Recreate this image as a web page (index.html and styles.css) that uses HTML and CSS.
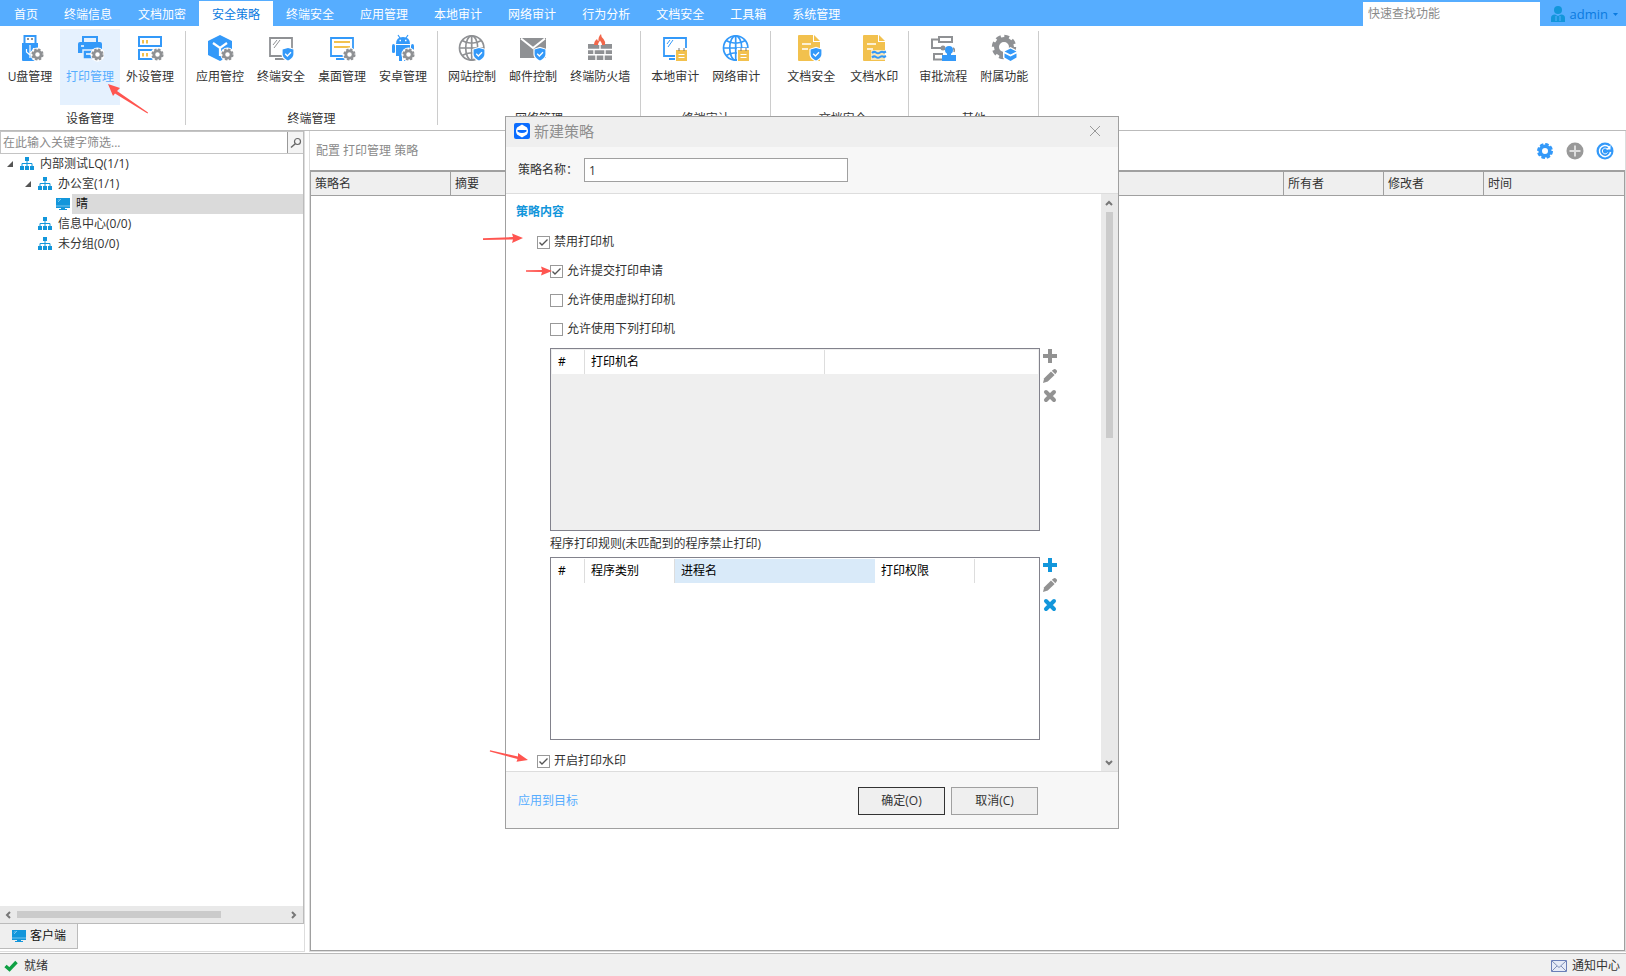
FILE: index.html
```html
<!DOCTYPE html>
<html lang="zh-CN">
<head>
<meta charset="utf-8">
<title>安全策略 - 打印管理</title>
<link rel="stylesheet" href="styles.css">
</head>
<body>
<svg class="defs" aria-hidden="true">
  <symbol id="gear" viewBox="-8 -8 16 16">
    <circle r="7.6" fill="#fff"/>
    <circle r="3.9" fill="#fff" stroke="#8f9194" stroke-width="3"/>
    <circle r="5.6" fill="none" stroke="#8f9194" stroke-width="1.8" stroke-dasharray="2.6 1.8"/>
  </symbol>
  <symbol id="shield" viewBox="-8 -8 16 16">
    <path d="M0-7.2L6.6-5V0C6.6 4 3 6.600 0 7.6C-3 6.600-6.6 4-6.6 0V-5Z" fill="#fff"/>
    <path d="M0-6L5.4-4.4V0C5.4 3.4 2.4 5.4 0 6.4C-2.4 5.4-5.4 3.4-5.4 0V-4.4Z" fill="#3399f9"/>
    <path d="M-2.8-.2L-.6 2L3-1.8" fill="none" stroke="#fff" stroke-width="1.3"/>
  </symbol>
  <symbol id="note" viewBox="0 0 13 14">
    <path d="M0 1H13V14H0Z" fill="#fff"/>
    <path d="M1 3H12V14H1Z" fill="#f2c14e"/>
    <path d="M4 1V4M9 1V4" stroke="#777" stroke-width="1"/>
    <path d="M3.5 7.5H9.5M3.5 10.5H9.5" stroke="#fff" stroke-width="1.2"/>
  </symbol>
  <symbol id="globe" viewBox="0 0 28 28">
    <g fill="none" stroke="currentColor" stroke-width="1.7">
      <circle cx="13.7" cy="14" r="12.2"/><ellipse cx="13.7" cy="14" rx="6" ry="12.2"/>
      <path d="M13.7 2V26M1.5 14H26M4 6.5Q13.7 12 23.4 6.5M4 21.5Q13.7 16 23.4 21.5"/>
    </g>
  </symbol>
  <symbol id="monitor" viewBox="0 0 28 28">
    <path d="M3 4H25V22H3Z" fill="none" stroke="currentColor" stroke-width="1.8"/>
    <path d="M8 25H19" stroke="currentColor" stroke-width="2"/>
  </symbol>
  <symbol id="doc" viewBox="0 0 28 28">
    <path d="M2 1H16V8H23V27H2Q1 27 1 26V2Q1 1 2 1Z" fill="#f2c14e"/>
    <path d="M17 1L23 7H17Z" fill="#f2c14e"/>
    <path d="M5 10H14M5 15H11" stroke="#fff" stroke-width="1.6"/>
  </symbol>
  <symbol id="org" viewBox="0 0 14 14">
    <path d="M5 0H9V4H5ZM0 9H4V13H0ZM5 9H9V13H5ZM10 9H14V13H10Z" fill="#1296db"/>
    <path d="M7 4V9M2 9V6.5H12V9" fill="none" stroke="#1296db"/>
  </symbol>
  <symbol id="pc" viewBox="0 0 14 14">
    <path d="M0 1H14V11H0Z" fill="#1296db"/>
    <path d="M0 9H14" stroke="#8fd0f2" stroke-width=".8"/>
    <path d="M2 5L5 2M2 3.5L3.5 2" stroke="#8fd0f2" stroke-width=".8"/>
    <path d="M5 11H9V12H11V13H3V12H5Z" fill="#1296db"/>
  </symbol>
  <symbol id="plus" viewBox="0 0 14 14"><path d="M5 0H9V5H14V9H9V14H5V9H0V5H5Z" fill="currentColor"/></symbol>
  <symbol id="pencil" viewBox="0 0 14 14">
    <path d="M0 14L1.2 9.2L8 2.4L11.600 6L4.8 12.6Z" fill="currentColor"/>
    <path d="M8.800 1.800L10.500 .4Q12 -.4 13.4 1Q14.6 2.4 13.6 3.600L12.300 5.200Z" fill="currentColor"/>
  </symbol>
  <symbol id="cross" viewBox="0 0 14 14"><path d="M3 3L11 11M11 3L3 11" stroke="currentColor" stroke-width="4" stroke-linecap="round"/></symbol>
  <symbol id="chev" viewBox="0 0 8 8"><path d="M1 6L4 3L7 6" fill="none" stroke="currentColor" stroke-width="2"/></symbol>
</svg>

<header class="topbar">
  <nav class="tabs">
    <a href="#">首页</a><a href="#">终端信息</a><a href="#">文档加密</a><a href="#" class="active">安全策略</a><a href="#">终端安全</a><a href="#">应用管理</a><a href="#">本地审计</a><a href="#">网络审计</a><a href="#">行为分析</a><a href="#">文档安全</a><a href="#">工具箱</a><a href="#">系统管理</a>
  </nav>
  <input class="quick-search" type="text" placeholder="快速查找功能" aria-label="快速查找功能">
  <button class="user">
    <svg width="14" height="16" viewBox="0 0 14 16"><ellipse cx="7" cy="4" rx="4" ry="4" fill="#1296db"/><path d="M0 16V12Q0 9 4 8.6L7 10L10 8.6Q14 9 14 12V16Z" fill="#1296db"/><path d="M5 10V15M9 10V15" stroke="#56adff"/></svg>
    <span>admin</span>
    <svg width="5" height="3" viewBox="0 0 5 3"><path d="M0 0H5L2.500 3Z" fill="#0a7ae0"/></svg>
  </button>
</header>

<section class="ribbon">
  <div class="group first">
    <div class="tools">
      <button class="tool"><svg class="ico" viewBox="0 0 28 28"><path d="M6 9H22V27H7Q6 27 6 26Z" fill="#3399f9"/><path d="M8.500 9V2H19.500V9" fill="#fff" stroke="#3399f9" stroke-width="2"/><path d="M11 4H13V6H11ZM15 4H17V6H15Z" fill="#8f9194"/><path d="M14 11V24M10.500 15V18L14 21M17.500 14V17L14 19" fill="none" stroke="#fff" stroke-width="1.200"/><use href="#gear" x="14" y="13" width="15" height="15"/></svg>U盘管理</button>
      <button class="tool selected"><svg class="ico" viewBox="0 0 28 28"><path d="M7 9V3H21V9" fill="none" stroke="#3399f9" stroke-width="2"/><path d="M4 8H24Q26 8 26 10V19H2V10Q2 8 4 8Z" fill="#3399f9"/><path d="M5 12H8" stroke="#fff" stroke-width="1.500"/><path d="M7 16H21V25H7Z" fill="#3399f9" stroke="#e5f1fe" stroke-width="1.500"/><path d="M10 20H15" stroke="#fff" stroke-width="1.500"/><use href="#gear" x="14" y="13" width="15" height="15"/></svg>打印管理</button>
      <button class="tool"><svg class="ico" viewBox="0 0 28 28"><path d="M3 3H25V12H3ZM3 16H25V25H3Z" fill="none" stroke="#3399f9" stroke-width="2"/><path d="M7 6V9.500M11 6V9.500M7 19V22.500M11 19V22.500" stroke="#f2c14e" stroke-width="2"/><use href="#gear" x="14" y="13" width="15" height="15"/></svg>外设管理</button>
    </div>
    <div class="caption">设备管理</div>
  </div>
  <div class="group">
    <div class="tools">
      <button class="tool"><svg class="ico" viewBox="0 0 28 28"><path d="M14 1L26 7V21L14 27L2 21V7Z" fill="#3399f9"/><path d="M7 9L14 14L21 9M14 14V22" fill="none" stroke="#fff" stroke-width="2.200"/><use href="#gear" x="14" y="13" width="15" height="15"/></svg>应用管控</button>
      <button class="tool grey"><svg class="ico" viewBox="0 0 28 28"><use href="#monitor"/><path d="M6 11L10 6M7 14L13 6" stroke="#8f9194"/><use href="#shield" x="13" y="12" width="16" height="16"/></svg>终端安全</button>
      <button class="tool"><svg class="ico blue" viewBox="0 0 28 28"><use href="#monitor"/><path d="M6 8H22M6 13H22" stroke="#f2c14e" stroke-width="2"/><use href="#gear" x="14" y="13" width="15" height="15"/></svg>桌面管理</button>
      <button class="tool"><svg class="ico" viewBox="0 0 28 28"><path d="M7 10Q7 3 14 3Q21 3 21 10ZM7 11H21V22H18V27H15V22H13V27H10V22H7ZM3 12Q3 10 4.500 10Q6 10 6 12V18Q6 19 4.500 19Q3 19 3 18ZM22 12Q22 10 23.500 10Q25 10 25 12V18H22Z" fill="#3399f9"/><path d="M9 1L11 4M19 1L17 4" stroke="#3399f9" stroke-width="1.200"/><path d="M10.500 6.500H12M16 6.500H17.500" stroke="#fff" stroke-width="1.500"/><use href="#gear" x="12" y="13" width="15" height="15"/></svg>安卓管理</button>
    </div>
    <div class="caption">终端管理</div>
  </div>
  <div class="group">
    <div class="tools">
      <button class="tool"><svg class="ico grey" viewBox="0 0 28 28"><use href="#globe"/><use href="#shield" x="13" y="12" width="16" height="16"/></svg>网站控制</button>
      <button class="tool"><svg class="ico" viewBox="0 0 28 28"><path d="M1 4H27V24H1Z" fill="#8f9194"/><path d="M2 4.500L14 14L26 4.500" fill="none" stroke="#fff" stroke-width="2"/><use href="#shield" x="13" y="12" width="16" height="16"/></svg>邮件控制</button>
      <button class="tool"><svg class="ico" viewBox="0 0 28 28"><path d="M2 10H26V26H2Z" fill="#8f9194"/><path d="M2 15.500H26M2 20.800H26M14 10V15M8 16V21M19 16V21M10 21V26M18 21V26" stroke="#fff" stroke-width="1.400"/><path d="M8 11Q8 7 11 5Q11.500 7 12.500 7Q12 3 15 0Q15 3 17.500 5Q20 8 19 11Z" fill="#f2674b"/><path d="M12 11Q12 9 14 6.500Q16 9 16 11Z" fill="#fff"/></svg>终端防火墙</button>
    </div>
    <div class="caption">网络管理</div>
  </div>
  <div class="group">
    <div class="tools">
      <button class="tool"><svg class="ico blue" viewBox="0 0 28 28"><use href="#monitor"/><path d="M6 10L9 6M7 13L12 6" stroke="#3399f9"/><use href="#note" x="14" y="13" width="13" height="14"/></svg>本地审计</button>
      <button class="tool"><svg class="ico blue" viewBox="0 0 28 28"><use href="#globe"/><use href="#note" x="15" y="13" width="13" height="14"/></svg>网络审计</button>
    </div>
    <div class="caption">终端审计</div>
  </div>
  <div class="group wide">
    <div class="tools">
      <button class="tool"><svg class="ico" viewBox="0 0 28 28"><use href="#doc"/><use href="#shield" x="11" y="12" width="16" height="16"/></svg>文档安全</button>
      <button class="tool"><svg class="ico" viewBox="0 0 28 28"><use href="#doc" x="2"/><path d="M11 16H28V26H11Z" fill="#fff" opacity=".6"/><path d="M12 19Q14 17 16 18.500T20 18.500T24 18.500L26 17.500M12 23.500Q14 21.500 16 23T20 23T24 23L26 22" fill="none" stroke="#3399f9" stroke-width="2"/></svg>文档水印</button>
    </div>
    <div class="caption">文档安全</div>
  </div>
  <div class="group">
    <div class="tools">
      <button class="tool"><svg class="ico" viewBox="0 0 28 28"><path d="M10 3H23V8H10ZM9 5.500H3V14H13M14 20H5V25.500H14" fill="none" stroke="#8f9194" stroke-width="2"/><circle cx="14" cy="14" r="2.500" fill="#8f9194"/><path d="M24 14Q26 15 25 18" fill="none" stroke="#8f9194" stroke-width="1.500"/><circle cx="20" cy="16" r="4" fill="#3399f9"/><path d="M18 18H22V21H27V27H13V21H18Z" fill="#3399f9"/></svg>审批流程</button>
      <button class="tool"><svg class="ico" viewBox="0 0 28 28"><circle cx="14" cy="13" r="7.500" fill="none" stroke="#8f9194" stroke-width="5"/><circle cx="14" cy="13" r="10.500" fill="none" stroke="#8f9194" stroke-width="3.400" stroke-dasharray="4.800 3.447"/><path d="M20.500 13L28 17V24L20.500 28L13 24V17Z" fill="#fff"/><path d="M20.500 14.500L26.500 17.500L20.500 20.500L14.500 17.500ZM14.500 19.500L20.500 22.500L26.500 19.500V23.500L20.500 27L14.500 23.500Z" fill="#3399f9"/></svg>附属功能</button>
    </div>
    <div class="caption">其他</div>
  </div>
</section>

<main class="workspace">
  <aside class="side">
    <div class="tree-box">
      <div class="filter">
        <input type="text" placeholder="在此输入关键字筛选..." aria-label="筛选">
        <button aria-label="搜索"><svg width="12" height="12" viewBox="0 0 12 12"><circle cx="7.500" cy="4.500" r="3" fill="none" stroke="#666" stroke-width="1.200"/><path d="M5 7L1 10.500" stroke="#666" stroke-width="1.500"/></svg></button>
      </div>
      <ul class="tree">
        <li class="node"><span class="twist open"></span><svg class="i14"><use href="#org"/></svg><span class="name">内部测试LQ(1/1)</span></li>
        <li class="node l2"><span class="twist open"></span><svg class="i14"><use href="#org"/></svg><span class="name">办公室(1/1)</span></li>
        <li class="node l3"><span class="twist"></span><svg class="i14"><use href="#pc"/></svg><span class="name on">晴</span></li>
        <li class="node l2"><span class="twist"></span><svg class="i14"><use href="#org"/></svg><span class="name">信息中心(0/0)</span></li>
        <li class="node l2"><span class="twist"></span><svg class="i14"><use href="#org"/></svg><span class="name">未分组(0/0)</span></li>
      </ul>
      <div class="hscroll" aria-hidden="true">
        <svg class="arr left"><use href="#chev"/></svg>
        <div class="track"><div class="thumb"></div></div>
        <svg class="arr right"><use href="#chev"/></svg>
      </div>
    </div>
    <button class="side-tab"><svg class="i14"><use href="#pc"/></svg>客户端</button>
  </aside>

  <section class="content">
    <div class="content-head">
      <span>配置 打印管理 策略</span>
      <div class="actions">
        <button aria-label="设置"><svg width="18" height="18" viewBox="-9 -9 18 18"><circle r="4.800" fill="none" stroke="#3399f9" stroke-width="3.600"/><circle r="7" fill="none" stroke="#3399f9" stroke-width="2" stroke-dasharray="3.600 1.898"/></svg></button>
        <button aria-label="添加"><svg width="18" height="18" viewBox="-9 -9 18 18"><circle r="8.500" fill="#999"/><path d="M-5.500 0H5.500M0-5.500V5.500" stroke="#ddd" stroke-width="2"/></svg></button>
        <button aria-label="刷新"><svg width="18" height="18" viewBox="-9 -9 18 18"><circle r="8.500" fill="#3399f9"/><path d="M4-4A5.600 5.600 0 1 0 5.600 1" fill="none" stroke="#fff" stroke-width="1.500"/><path d="M2.500-1.500A2.800 2.800 0 1 0 2.500 1.500" fill="none" stroke="#fff" stroke-width="1"/><path d="M5.500-6V-1.500H1Z" fill="#fff"/></svg></button>
      </div>
    </div>
    <div class="grid-box">
      <table class="grid">
        <colgroup><col class="c-name"><col><col class="c-mid"><col class="c-mid"><col class="c-time"></colgroup>
        <thead><tr><th>策略名</th><th>摘要</th><th>所有者</th><th>修改者</th><th>时间</th></tr></thead>
      </table>
    </div>
  </section>
</main>

<footer class="status">
  <span class="ready"><svg width="14" height="12" viewBox="0 0 14 12"><path d="M1.500 6L5.500 9.500L12.500 2" fill="none" stroke="#0ea043" stroke-width="3.400"/></svg>就绪</span>
  <a href="#" class="notice"><svg width="16" height="12" viewBox="0 0 16 12"><path d="M.5.5H15.500V11.500H.5Z" fill="#e6ebf7" stroke="#6a7fb8"/><path d="M1 1L8 7.500L15 1M1 11L6 6M15 11L10 6" fill="none" stroke="#8090b8"/></svg>通知中心</a>
</footer>

<section class="dialog" role="dialog" aria-labelledby="dlg-title">
  <div class="dlg-title">
    <svg width="16" height="16" viewBox="0 0 16 16"><rect width="16" height="16" rx="2" fill="#0a6cff"/><path d="M8 1.500L13 4.500Q15 8 13 11.500L8 14.500L3 11.500Q1 8 3 4.500Z" fill="#fff"/><path d="M3.500 7H12.500V8.500Q8 11.500 3.500 8.500Z" fill="#0a6cff"/></svg>
    <h1 id="dlg-title">新建策略</h1>
    <button aria-label="关闭"><svg width="12" height="12" viewBox="0 0 12 12"><path d="M1 1L11 11M11 1L1 11" stroke="#999"/></svg></button>
  </div>
  <div class="dlg-name">
    <label for="pname">策略名称：</label>
    <input id="pname" type="text" value="1">
  </div>
  <div class="dlg-body">
    <div class="form">
      <h2>策略内容</h2>
      <label class="check"><input type="checkbox" checked>禁用打印机</label>
      <div class="nested">
        <label class="check"><input type="checkbox" checked>允许提交打印申请</label>
        <label class="check"><input type="checkbox">允许使用虚拟打印机</label>
        <label class="check"><input type="checkbox">允许使用下列打印机</label>
        <div class="list-row">
          <div class="list off">
            <table><colgroup><col class="w-no"><col class="w-printer"><col></colgroup><thead><tr><th>#</th><th>打印机名</th><th></th></tr></thead></table>
          </div>
          <div class="list-btns">
            <button aria-label="添加"><svg class="i14"><use href="#plus"/></svg></button>
            <button aria-label="编辑"><svg class="i14"><use href="#pencil"/></svg></button>
            <button aria-label="删除"><svg class="i14"><use href="#cross"/></svg></button>
          </div>
        </div>
        <p class="rule">程序打印规则(未匹配到的程序禁止打印)</p>
        <div class="list-row">
          <div class="list">
            <table><colgroup><col class="w-no"><col class="w-type"><col class="w-proc"><col class="w-perm"><col></colgroup><thead><tr><th>#</th><th>程序类别</th><th class="hot">进程名</th><th>打印权限</th><th></th></tr></thead></table>
          </div>
          <div class="list-btns">
            <button class="live" aria-label="添加"><svg class="i14"><use href="#plus"/></svg></button>
            <button aria-label="编辑"><svg class="i14"><use href="#pencil"/></svg></button>
            <button class="live" aria-label="删除"><svg class="i14"><use href="#cross"/></svg></button>
          </div>
        </div>
      </div>
      <label class="check last"><input type="checkbox" checked>开启打印水印</label>
    </div>
    <div class="vscroll" aria-hidden="true">
      <svg class="arr"><use href="#chev"/></svg>
      <div class="track"><div class="thumb"></div></div>
      <svg class="arr down"><use href="#chev"/></svg>
    </div>
  </div>
  <div class="dlg-foot">
    <a href="#">应用到目标</a>
    <div class="dlg-btns"><button class="primary">确定(O)</button><button>取消(C)</button></div>
  </div>
</section>

<svg class="marks" width="1120" height="780" viewBox="0 0 1120 780" aria-hidden="true">
  <g fill="#ff5550">
    <path d="M108 84L120 88L117 91L148 112.500L147.500 113.500L115 93.500L113 96Z"/>
    <path d="M523 238L512 233.500L513 237L483 238.300V240L513 239.500L512 243Z"/>
    <path d="M552 271L541 266.500L542 270L526 270.200V271.800L542 272L541 275.500Z"/>
    <path d="M528 760L518 753L518 756.500L490 750.200L489.800 751.500L517.500 759L516.500 761.800Z"/>
  </g>
</svg>
</body>
</html>
```

FILE: styles.css
```css
* { box-sizing: border-box; }
body {
  margin: 0;
  height: 100vh;
  display: flex;
  flex-direction: column;
  background: #fff;
  color: #333;
  font: 12px/20px "Open Sans", "Noto Sans CJK SC", sans-serif;
  overflow: hidden;
}
button, input { font: inherit; color: inherit; border: 0; padding: 0; background: none; border-radius: 0; outline: 0; }
a { text-decoration: none; color: inherit; }
svg { display: block; flex: none; }
.defs { position: absolute; width: 0; height: 0; }
.i14 { width: 14px; height: 14px; }
input::placeholder { color: #8a8a8a; opacity: 1; }

.topbar { display: flex; height: 26px; background: #56adff; flex: none; }
.tabs { display: flex; padding-left: 1px; margin-right: auto; }
.tabs a { margin-top: 1px; padding: 4px 13px 0; color: #fff; white-space: nowrap; }
.tabs .active { background: #fff; color: #0a7ae0; }
.quick-search { width: 177px; margin-top: 2px; padding: 0 5px; background: #fff; }
.user { width: 86px; display: flex; align-items: center; justify-content: flex-end; gap: 5px; padding: 2px 8px 0 0; color: #0a7ae0; }
.user span { font-size: 13px; line-height: 20px; }

.ribbon { display: flex; border-bottom: 1px solid #bbb; flex: none; }
.group { position: relative; padding: 3px 4px 1px; border-right: 1px solid #ccc; border-image: linear-gradient(#fff 6px, #ccc 6px, #ccc 98px, #fff 98px) 1; }
.group.first { padding-left: 0; padding-right: 5px; }
.group.wide { padding-left: 10px; }
.tools { display: flex; gap: 1px; }
.first .tools { gap: 0; }
.wide .tools { gap: 3px; }
.tool { min-width: 60px; height: 76px; padding: 5px 6px 0; display: flex; flex-direction: column; align-items: center; gap: 5px; justify-content: flex-start; white-space: nowrap; }
.tool.selected { background: #e5f1fe; color: #56adff; }
.ico { width: 28px; height: 28px; color: #3399f9; }
.ico.grey, .tool.grey .ico { color: #8f9194; }
.caption { margin-top: 4px; text-align: center; }

.workspace { flex: 1; min-height: 0; display: flex; gap: 4px; margin-bottom: 1px; }
.side { width: 305px; flex: none; display: flex; flex-direction: column; align-items: flex-start; border-right: 1px solid #ddd; border-bottom: 1px solid #ddd; padding-bottom: 2px; }
.tree-box { flex: 1; width: 100%; display: flex; flex-direction: column; border-right: 1px solid #bbb; border-bottom: 1px solid #bbb; }
.filter { display: flex; height: 23px; border: solid #c4c4c4; border-width: 1px 0 1px 1px; }
.filter input { flex: 1; min-width: 0; padding: 0 2px; }
.filter button { width: 16px; border-left: 1px solid #999; display: grid; place-items: center; background: #f4f4f4; }
.tree { flex: 1; list-style: none; margin: 0; padding: 0; }
.node { display: flex; align-items: center; height: 20px; padding-left: 7px; }
.l2 { padding-left: 25px; }
.l3 { padding-left: 43px; }
.twist { width: 13px; height: 6px; flex: none; }
.twist.open::before { content: ""; display: block; width: 6px; height: 6px; background: #555; clip-path: polygon(100% 0, 100% 100%, 0 100%); }
.name { margin-left: 2px; padding-left: 4px; height: 20px; flex: 1; }
.name.on { background: #dadada; color: #111; }
.hscroll { display: flex; align-items: center; height: 17px; background: #e9e9e9; }
.hscroll .track { flex: 1; }
.hscroll .thumb { width: 76%; height: 7px; background: #cbcbcb; }
.arr { width: 8px; height: 8px; margin: 0 5px 0 4px; color: #777; }
.arr.left { transform: rotate(-90deg); }
.arr.right { transform: rotate(90deg); }
.arr.down { transform: rotate(180deg); }
.side-tab { display: flex; align-items: center; gap: 4px; width: 78px; height: 25px; padding-left: 12px; background: #efefef; border: solid #bbb; border-width: 0 1px 1px 0; color: #111; }

.content { flex: 1; min-width: 0; display: flex; flex-direction: column; border: 1px solid #ddd; border-top: 0; }
.content-head { display: flex; align-items: center; justify-content: space-between; height: 39px; padding: 0 11px 0 6px; color: #8a8a8a; }
.actions { display: flex; gap: 12px; }
.grid-box { flex: 1; border: 1px solid #a0a0a0; border-top-width: 2px; }
table { width: 100%; border-collapse: separate; border-spacing: 0; table-layout: fixed; }
th { text-align: left; font-weight: 400; padding: 0; white-space: nowrap; }
.grid th { height: 24px; padding: 0 4px; background: #efefef; border-bottom: 1px solid #a0a0a0; border-right: 1px solid #a0a0a0; }
.grid th:last-child { border-right: 0; }
.c-name { width: 140px; }
.c-mid { width: 100px; }
.c-time { width: 140px; }

.status { display: flex; align-items: center; justify-content: space-between; height: 23px; flex: none; background: #f0f0f0; border-top: 1px solid #bbb; padding: 2px 6px 0 4px; }
.ready { display: flex; align-items: center; gap: 6px; }
.notice { display: flex; align-items: center; gap: 5px; }

.dialog { position: absolute; left: 505px; top: 116px; width: 614px; background: #fff; border: 1px solid #a0a0a0; }
.dlg-title { display: flex; align-items: center; height: 30px; padding: 0 17px 2px 8px; background: #efefef; color: #8f8f8f; }
.dlg-title h1 { margin: 0 auto 0 4px; font-size: 15px; font-weight: 400; line-height: 20px; }
.dlg-name { display: flex; align-items: center; height: 47px; padding: 0 12px; background: #f7f7f7; border-bottom: 1px solid #ddd; }
.dlg-name label { width: 66px; }
.dlg-name input { width: 264px; height: 24px; padding: 0 4px; background: #fff; border: 1px solid #a0a0a0; }
.dlg-body { display: flex; }
.form { flex: 1; padding: 8px 10px 0; }
.form h2 { margin: 0 0 10px; font-size: 12px; line-height: 20px; font-weight: 700; color: #1296db; }
.check { display: flex; align-items: center; gap: 4px; width: fit-content; margin: 0 0 9px 21px; line-height: 20px; }
.nested { margin-left: 34px; }
.nested .check { margin-left: 0; }
.check.last { margin: 11px 0 0 21px; }
.check input { appearance: none; width: 13px; height: 13px; margin: 0; border: 1px solid #999; background: #fff; }
.check input:checked { background: url("data:image/svg+xml,%3Csvg xmlns='http://www.w3.org/2000/svg' viewBox='0 0 11 11'%3E%3Cpath d='M1.500 5.500L4 8L9.500 2.500' fill='none' stroke='%23555' stroke-width='1.400'/%3E%3C/svg%3E"); }
.list-row { display: flex; gap: 3px; }
.list { width: 490px; height: 183px; border: 1px solid #82828c; padding: 1px; }
.list.off { background: #efefef; }
.list th { height: 24px; padding-left: 6px; border-right: 1px solid #ddd; background: #fff; color: #000; }
.list th:last-child { border-right: 0; }
.list .hot { background: #d9eaf9; border-right-color: #d9eaf9; }
.w-no { width: 33px; }
.w-printer { width: 240px; }
.w-type { width: 90px; }
.w-proc { width: 200px; }
.w-perm { width: 100px; }
.list-btns { display: flex; flex-direction: column; gap: 6px; padding-top: 1px; color: #929292; }
.list-btns .live { color: #1296db; }
.rule { margin: 3px 0; }
.vscroll { width: 17px; display: flex; flex-direction: column; align-items: center; background: #e9e9e9; padding: 5px 0 4px; }
.vscroll .track { flex: 1; padding-top: 5px; }
.vscroll .thumb { width: 7px; height: 226px; background: #cbcbcb; }
.dlg-foot { display: flex; align-items: center; justify-content: space-between; height: 57px; padding: 2px 80px 0 12px; background: #f7f7f7; border-top: 1px solid #ddd; }
.dlg-foot a { color: #56adff; }
.dlg-btns { display: flex; gap: 6px; }
.dlg-btns button { width: 87px; height: 28px; background: #efefef; border: 1px solid #a0a0a0; }
.dlg-btns .primary { border-color: #333; }
.marks { position: absolute; left: 0; top: 0; pointer-events: none; }
```
